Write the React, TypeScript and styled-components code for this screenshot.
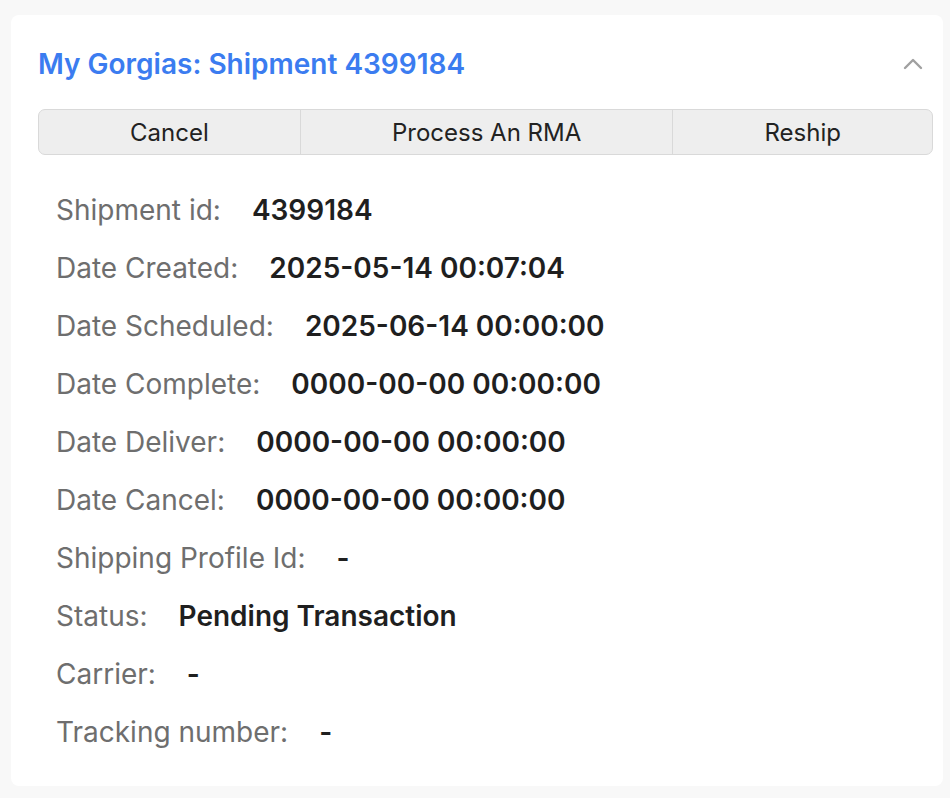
import styled, { createGlobalStyle } from "styled-components";

const GlobalStyle = createGlobalStyle`
  html, body {
    margin: 0;
    padding: 0;
    background: #f8f8f8;
    font-family: Inter, "Noto Sans", sans-serif;
  }
`;

const Page = styled.div`
  padding: 15px 7px 11px 11px;
`;

const Card = styled.section`
  background: #ffffff;
  border-radius: 8px;
  padding: 0 10px 25px 27px;
`;

const Header = styled.div`
  display: flex;
  align-items: center;
  justify-content: space-between;
  padding: 32px 10px 28px 0;
`;

const Title = styled.h2`
  margin: 0;
  font-size: 28px;
  line-height: 34px;
  font-weight: 600;
  color: #3b7cf0;
`;

const Chevron = styled.svg`
  width: 20px;
  height: 12px;
  color: #a0a0a0;
`;

const ButtonGroup = styled.div`
  display: flex;
  height: 46px;
  box-sizing: border-box;
  border: 1.5px solid #d9d9d9;
  border-radius: 7px;
  background: #eeeeee;
  overflow: hidden;
`;

const GroupButton = styled.button`
  flex: 1 1 auto;
  padding: 0;
  border: none;
  border-left: 1.5px solid #d9d9d9;
  background: transparent;
  font-family: inherit;
  font-size: 24px;
  color: #222222;
  cursor: pointer;

  &:first-child {
    border-left: none;
  }
`;

const Details = styled.div`
  padding: 26px 0 0 18px;
`;

const Row = styled.div`
  display: flex;
  align-items: center;
  height: 58px;
  font-size: 28px;
`;

const Label = styled.span`
  color: #6e6e6e;
  margin-right: 31px;
`;

const Value = styled.span`
  color: #1f1f1f;
  font-weight: 600;
`;

const rows: [string, string][] = [
  ["Shipment id:", "4399184"],
  ["Date Created:", "2025-05-14 00:07:04"],
  ["Date Scheduled:", "2025-06-14 00:00:00"],
  ["Date Complete:", "0000-00-00 00:00:00"],
  ["Date Deliver:", "0000-00-00 00:00:00"],
  ["Date Cancel:", "0000-00-00 00:00:00"],
  ["Shipping Profile Id:", "-"],
  ["Status:", "Pending Transaction"],
  ["Carrier:", "-"],
  ["Tracking number:", "-"],
];

export default function App() {
  return (
    <Page>
      <GlobalStyle />
      <Card>
        <Header>
          <Title>My Gorgias: Shipment 4399184</Title>
          <Chevron viewBox="0 0 20 12" fill="none">
            <path
              d="M2 10 L10 2 L18 10"
              stroke="currentColor"
              strokeWidth="2.4"
              strokeLinecap="round"
              strokeLinejoin="round"
            />
          </Chevron>
        </Header>
        <ButtonGroup>
          <GroupButton>Cancel</GroupButton>
          <GroupButton>Process An RMA</GroupButton>
          <GroupButton>Reship</GroupButton>
        </ButtonGroup>
        <Details>
          {rows.map(([label, value]) => (
            <Row key={label}>
              <Label>{label}</Label>
              <Value>{value}</Value>
            </Row>
          ))}
        </Details>
      </Card>
    </Page>
  );
}
